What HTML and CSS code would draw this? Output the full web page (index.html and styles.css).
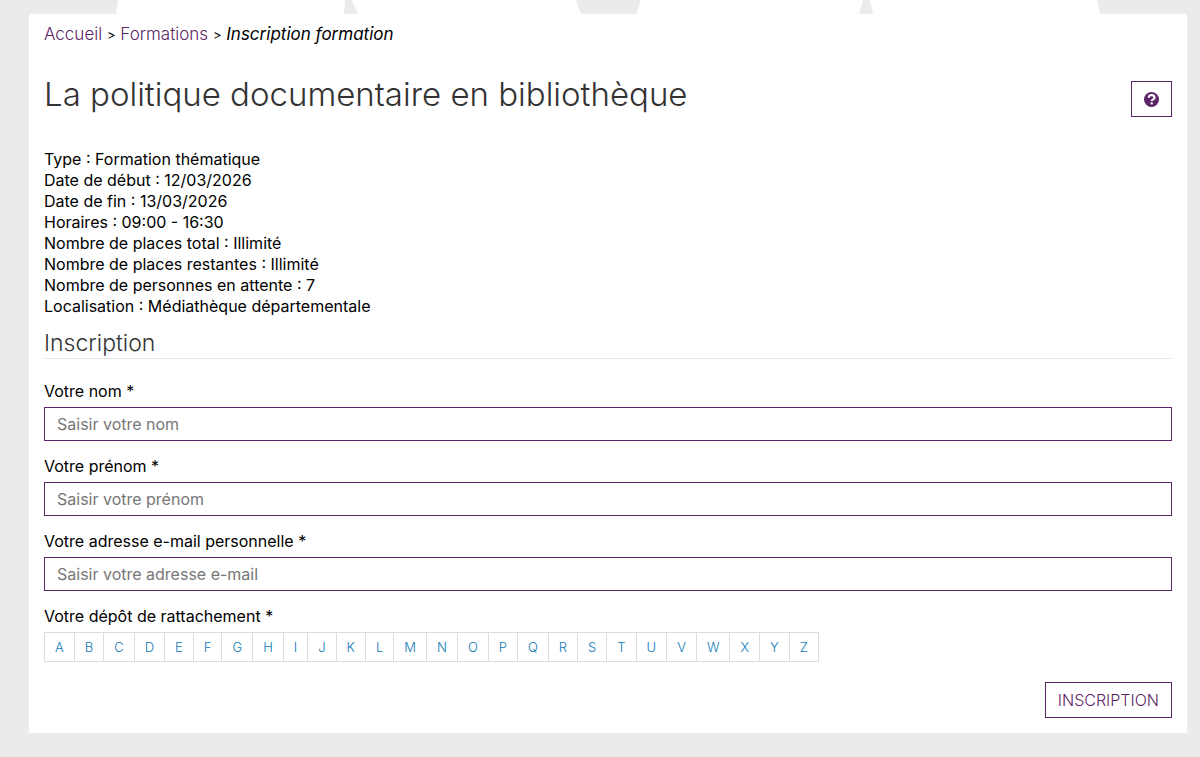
FILE: index.html
```html
<!DOCTYPE html>
<html lang="fr">
<head>
    <meta charset="UTF-8">
    <meta name="viewport" content="width=device-width, initial-scale=1.0">
    <title>Inscription formation</title>
    <link rel="stylesheet" href="styles.css">
</head>
<body>

    <!-- Bas du motif de fond -->
    <svg class="motif" viewBox="0 0 1200 14" preserveAspectRatio="none" aria-hidden="true">
        <path d="M118 0H345L344 14H116ZM352 0H576L581 14H358ZM641 0H863L859 14H636ZM870 0H1097L1100 14H873Z"/>
    </svg>

    <main class="page">
        <nav class="breadcrumb" aria-label="Fil d'Ariane">
            <a href="#">Accueil</a> <span class="separator">&gt;</span>
            <a href="#">Formations</a> <span class="separator">&gt;</span>
            <em>Inscription formation</em>
        </nav>

        <div class="page-header">
            <h1>La politique documentaire en bibliothèque</h1>
            <button type="button" class="btn btn-help" aria-label="Aide">
                <svg viewBox="0 0 16 16" aria-hidden="true">
                    <circle cx="8" cy="8" r="8"/>
                    <path class="mark" d="M5 6.2C5 4.2 6.2 3.3 8 3.3S11.2 4.3 11.2 6C11.2 8 8.2 7.8 8.2 9.6"/>
                    <path class="mark" d="M8.2 11V13.2"/>
                </svg>
            </button>
        </div>

        <ul class="infos">
            <li>Type : Formation thématique</li>
            <li>Date de début : 12/03/2026</li>
            <li>Date de fin : 13/03/2026</li>
            <li>Horaires : 09:00 - 16:30</li>
            <li>Nombre de places total : Illimité</li>
            <li>Nombre de places restantes : Illimité</li>
            <li>Nombre de personnes en attente : 7</li>
            <li>Localisation : Médiathèque départementale</li>
        </ul>

        <form>
            <h2>Inscription</h2>

            <div class="form-group">
                <label for="nom">Votre nom *</label>
                <input type="text" id="nom" placeholder="Saisir votre nom">
            </div>
            <div class="form-group">
                <label for="prenom">Votre prénom *</label>
                <input type="text" id="prenom" placeholder="Saisir votre prénom">
            </div>
            <div class="form-group">
                <label for="email">Votre adresse e-mail personnelle *</label>
                <input type="email" id="email" placeholder="Saisir votre adresse e-mail">
            </div>

            <div class="form-group">
                <p class="label" id="depot">Votre dépôt de rattachement *</p>
                <nav class="letters" aria-labelledby="depot">
                    <a href="#A">A</a>
                    <a href="#B">B</a>
                    <a href="#C">C</a>
                    <a href="#D">D</a>
                    <a href="#E">E</a>
                    <a href="#F">F</a>
                    <a href="#G">G</a>
                    <a href="#H">H</a>
                    <a href="#I">I</a>
                    <a href="#J">J</a>
                    <a href="#K">K</a>
                    <a href="#L">L</a>
                    <a href="#M">M</a>
                    <a href="#N">N</a>
                    <a href="#O">O</a>
                    <a href="#P">P</a>
                    <a href="#Q">Q</a>
                    <a href="#R">R</a>
                    <a href="#S">S</a>
                    <a href="#T">T</a>
                    <a href="#U">U</a>
                    <a href="#V">V</a>
                    <a href="#W">W</a>
                    <a href="#X">X</a>
                    <a href="#Y">Y</a>
                    <a href="#Z">Z</a>
                </nav>
            </div>

            <div class="actions">
                <button type="submit" class="btn">INSCRIPTION</button>
            </div>
        </form>
    </main>

</body>
</html>
```
FILE: styles.css
```css
:root {
    --purple: #5b2667;
    --blue: #0f7ab5;
    --grey: #ebebeb;
    --border: #dddddd;
}

* {
    margin: 0;
    padding: 0;
    box-sizing: border-box;
}

body {
    background-color: var(--grey);
    color: #000;
    font-family: Inter, "Open Sans", sans-serif;
    font-size: 16px;
    line-height: 21px;
}

.motif {
    display: block;
    width: 100%;
    height: 14px;
    fill: #fff;
}

.page {
    margin: 0 13px 23px 29px;
    padding: 10px 15px 15px;
    background-color: #fff;
}

/* Fil d'Ariane */
.breadcrumb {
    font-size: 17px;
}

.breadcrumb a {
    color: var(--purple);
    font-weight: 300;
    text-decoration: none;
}

.separator {
    font-size: 13px;
}

/* Titre */
.page-header {
    display: flex;
    justify-content: space-between;
    align-items: flex-end;
    margin: 31px 0 32px;
}

h1 {
    padding-bottom: 6px;
    color: #333;
    font-size: 33px;
    font-weight: 300;
    line-height: 34px;
}

h2 {
    margin: 15px 0 22px;
    padding-bottom: 4px;
    border-bottom: 1px solid #e5e5e5;
    color: #333;
    font-size: 23px;
    font-weight: 300;
    line-height: 22px;
}

.infos {
    list-style: none;
}

/* Boutons */
.btn {
    height: 36px;
    padding: 0 12px;
    border: 1px solid var(--purple);
    background-color: #fff;
    color: var(--purple);
    font: inherit;
    font-weight: 300;
    cursor: pointer;
}

.btn-help svg {
    display: block;
    width: 15px;
    height: 15px;
    fill: var(--purple);
}

.btn-help .mark {
    fill: none;
    stroke: #fff;
    stroke-width: 2.3;
}

/* Formulaire */
.form-group {
    margin-bottom: 15px;
}

label,
.label {
    display: block;
    margin-bottom: 5px;
}

input {
    display: block;
    width: 100%;
    height: 34px;
    padding: 0 12px;
    border: 1px solid var(--purple);
    background-color: #fff;
    font: inherit;
}

input::placeholder {
    color: #777;
}

.letters {
    display: flex;
    width: fit-content;
    border: 1px solid var(--border);
}

.letters a {
    padding: 0 10px;
    color: var(--blue);
    font-size: 13px;
    font-weight: 300;
    line-height: 28px;
    text-decoration: none;
}

.letters a + a {
    border-left: 1px solid var(--border);
}

.actions {
    display: flex;
    justify-content: flex-end;
    margin-top: 20px;
}
```
